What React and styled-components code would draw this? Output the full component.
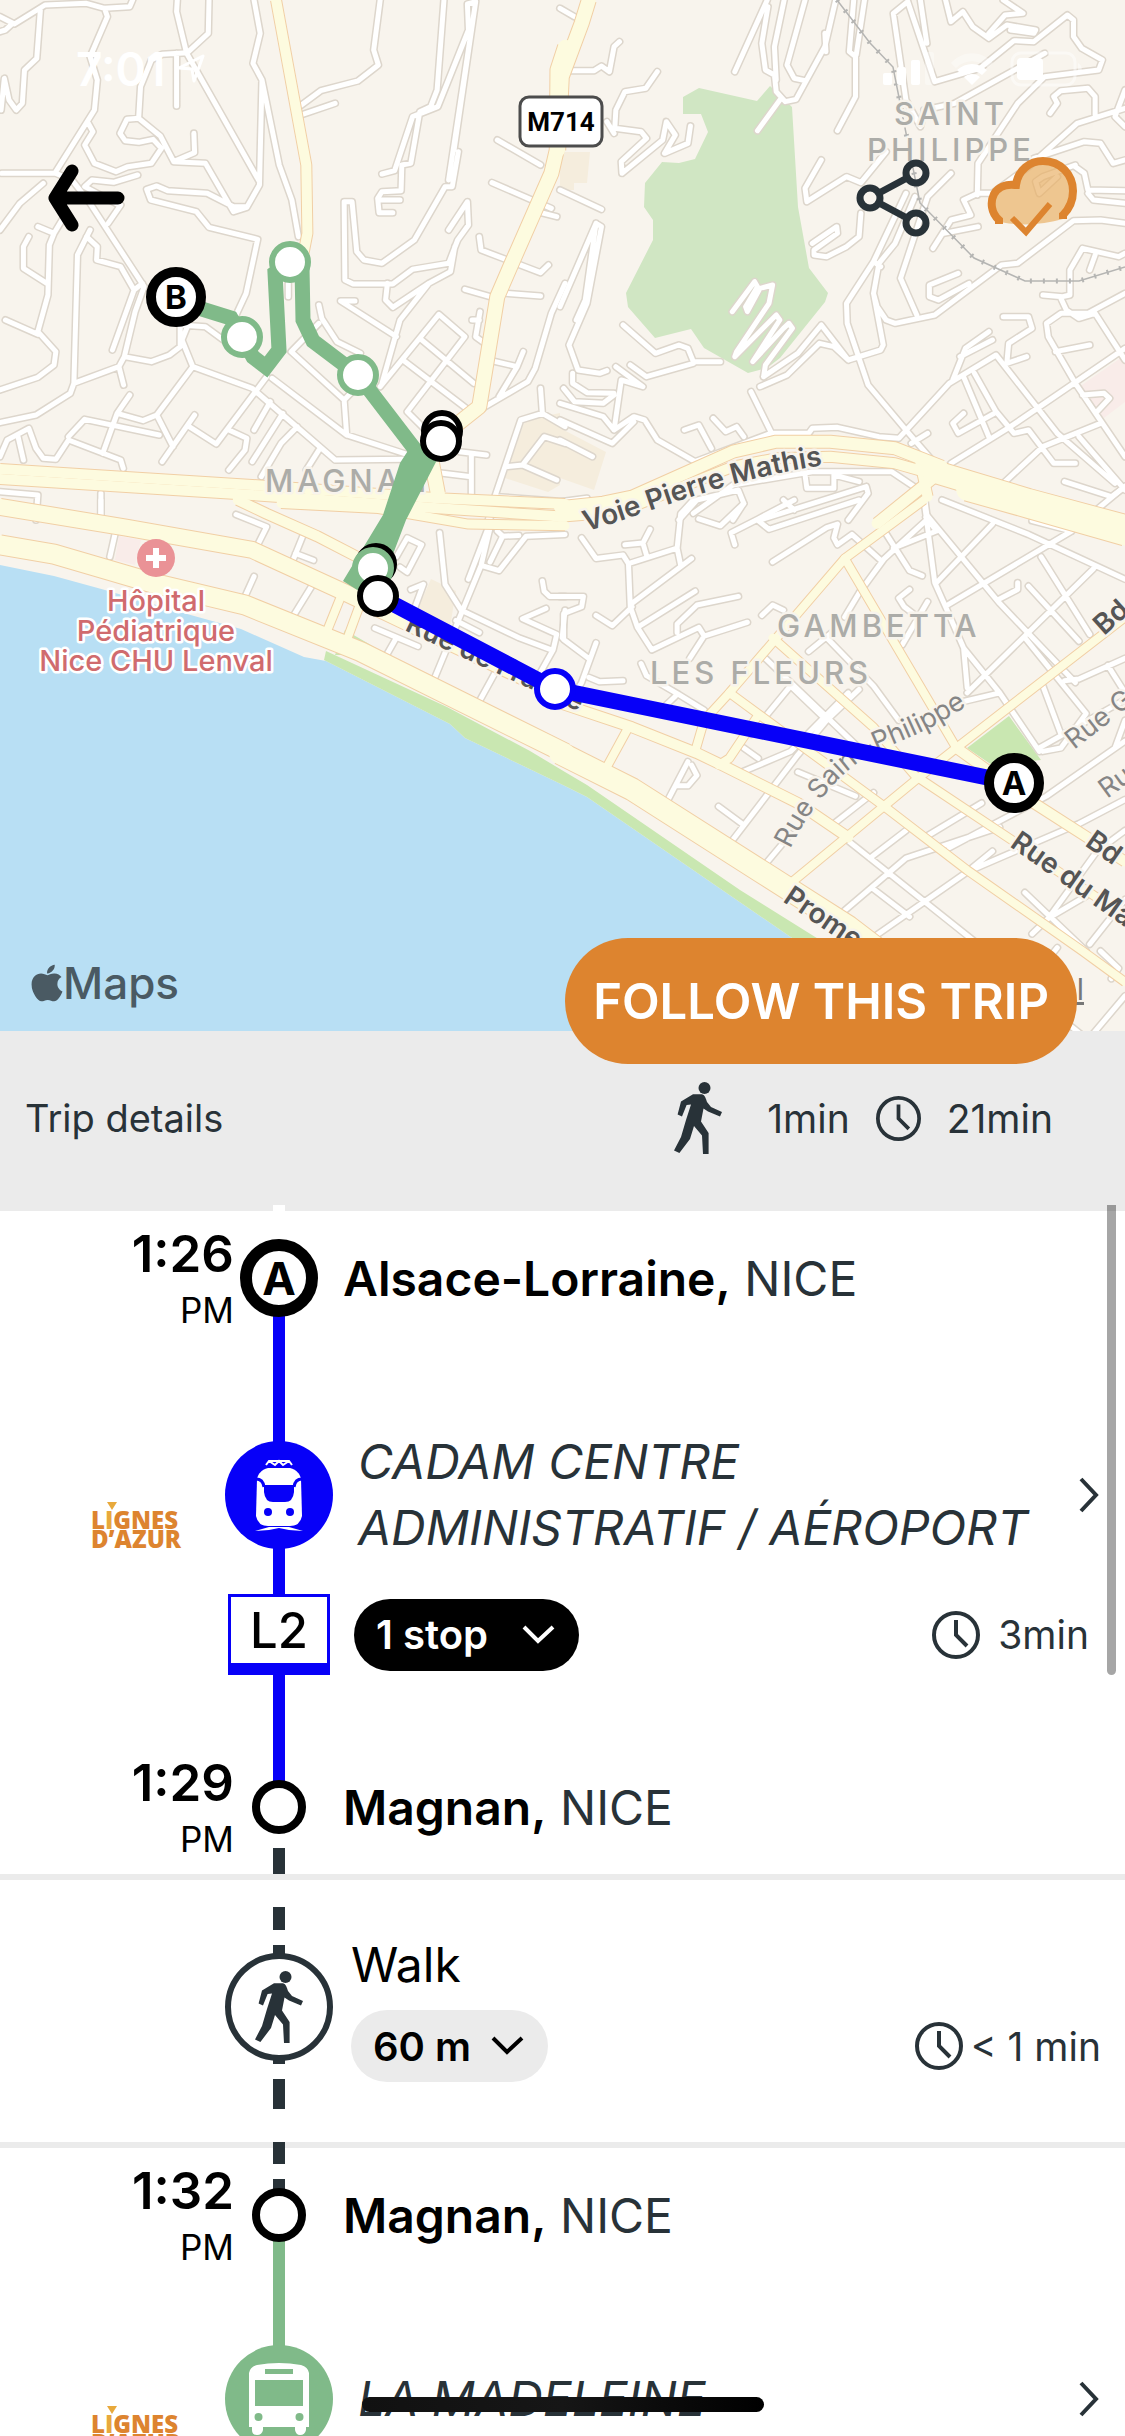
import styled, { createGlobalStyle, css } from "styled-components";
import { FaApple } from "react-icons/fa";

const dark = "#283238";
const tramBlue = "#0700f8";
const busGreen = "#80ba89";
const orange = "#dd842f";
const lightGrey = "#ebebeb";

export default function App() {
	return (
		<>
			<GlobalStyle />
			<Screen>
				<MapArea>
					<CityMap />
					<StatusBar>
						<StatusTime>
							7:01
							<LocationIcon />
						</StatusTime>
						<StatusIcons />
					</StatusBar>
					<TopBar>
						<IconButton aria-label="Back">
							<BackIcon />
						</IconButton>
						<TopActions>
							<IconButton aria-label="Share">
								<ShareIcon />
							</IconButton>
							<IconButton aria-label="Saved offline">
								<CloudIcon />
							</IconButton>
						</TopActions>
					</TopBar>
					<MapsBrand>
						<AppleLogo />
						Maps
					</MapsBrand>
					<LegalLink href="#legal">Legal</LegalLink>
					<FollowButton>FOLLOW THIS TRIP</FollowButton>
				</MapArea>

				<Summary>
					<SummaryTitle>Trip details</SummaryTitle>
					<SummaryItem $gap={45}>
						<WalkIcon />
						1min
					</SummaryItem>
					<SummaryItem $gap={26}>
						<ClockIcon size={45} />
						21min
					</SummaryItem>
				</Summary>

				<TripList>
					<Stop time="1:26" name="Alsace-Lorraine" letter="A" above="#fff" below={tramBlue} divider />
					<Ride
						color={tramBlue}
						icon={<TramIcon />}
						direction="CADAM CENTRE ADMINISTRATIF / AÉROPORT"
						line="L2"
						stops="1 stop"
						duration="3min"
					/>
					<Stop time="1:29" name="Magnan" above={tramBlue} below={dashBelow} />
					<Walk />
					<Stop time="1:32" name="Magnan" above={dashAbove} below={busGreen} divider />
					<Ride color={busGreen} icon={<BusIcon />} direction="LA MADELEINE" />
					<ScrollThumb />
				</TripList>
				<HomeIndicator />
			</Screen>
		</>
	);
}

/* ---------- trip rows ---------- */

const dashBelow = `transparent 41px, ${dark} 41px`;
const dashAbove = `${dark} 22px, transparent 22px, transparent 37px, ${dark} 37px`;
const dashWalk = `transparent 27px, ${dark} 27px, ${dark} 50px, transparent 50px, transparent 65px, ${dark} 65px, ${dark} 184px, transparent 184px, transparent 199px, ${dark} 199px, ${dark} 229px, transparent 229px`;

function Stop({ time, name, letter, above, below, divider }) {
	return (
		<StopRow $above={above} $below={below} $divider={divider}>
			<TimeCell>
				<Hour>{time}</Hour>
				<Meridiem>PM</Meridiem>
			</TimeCell>
			<StopDot $big={!!letter}>{letter}</StopDot>
			<StopName>
				<strong>{name},</strong> NICE
			</StopName>
		</StopRow>
	);
}

function Ride({ color, icon, direction, line, stops, duration }) {
	return (
		<RideBox $color={color}>
			<RideRow>
				<Operator>
					<LignesLogo />
				</Operator>
				<ModeBadge $color={color}>{icon}</ModeBadge>
				<Direction>
					<DirectionText>{direction}</DirectionText>
					<PlainButton aria-label="Show line">
						<ChevronRight />
					</PlainButton>
				</Direction>
			</RideRow>
			{line && (
				<RideRow>
					<span />
					<LineTag $color={color}>{line}</LineTag>
					<RideOptions>
						<Pill $dark>
							{stops}
							<ChevronDown />
						</Pill>
						<Duration $gap={18}>
							<ClockIcon size={48} />
							{duration}
						</Duration>
					</RideOptions>
				</RideRow>
			)}
		</RideBox>
	);
}

function Walk() {
	return (
		<WalkBox>
			<span />
			<WalkBadge>
				<WalkIcon />
			</WalkBadge>
			<WalkBody>
				<WalkTitle>Walk</WalkTitle>
				<WalkOptions>
					<Pill>
						60 m
						<ChevronDown />
					</Pill>
					<Duration $gap={8}>
						<ClockIcon size={48} />
						&lt; 1 min
					</Duration>
				</WalkOptions>
			</WalkBody>
		</WalkBox>
	);
}

/* ---------- icons ---------- */

function BackIcon() {
	return (
		<svg width="78" height="68" viewBox="0 0 78 68" fill="none" stroke="#000" strokeWidth="13" strokeLinecap="round">
			<path d="M25 7L8 34L25 61M10 34H71" strokeLinejoin="round" />
		</svg>
	);
}

function ShareIcon() {
	return (
		<svg width="74" height="84" viewBox="0 0 74 84" fill="none" stroke={dark} strokeWidth="7">
			<circle cx="14" cy="42" r="10" />
			<circle cx="60" cy="17" r="10" />
			<circle cx="60" cy="67" r="10" />
			<path d="M23 37L51 22M23 47L51 62" />
		</svg>
	);
}

function CloudIcon() {
	return (
		<svg width="92" height="84" viewBox="0 0 92 84" fill="none" stroke={orange} strokeWidth="8">
			<path d="M13 66C4 60 1 48 5 39C9 30 18 27 29 28C32 12 45 3 58 4C77 5 88 19 88 35C88 47 83 57 76 63C56 69 33 70 13 66Z" fill="#e9b064" fillOpacity=".68" stroke="none" />
			<path d="M12 68V64C4 57 3 46 7 38C11 31 19 28 28 29H29C31 14 43 5 56 5C74 5 86 19 86 35C86 45 82 53 76 59V63" />
			<path d="M25 62L39 76L63 48" strokeWidth="6" />
		</svg>
	);
}

function LocationIcon() {
	return (
		<svg width="28" height="30" viewBox="0 0 28 30" fill="none" stroke="#fff" strokeWidth="3" strokeLinejoin="round">
			<path d="M2 14L26 2L17 27L15 15Z" />
		</svg>
	);
}

function StatusIcons() {
	return (
		<svg width="202" height="40" viewBox="0 0 202 40" fill="#fff">
			<rect x="0" y="24" width="9" height="12" rx="2" />
			<rect x="14" y="18" width="9" height="18" rx="2" />
			<rect x="28" y="11" width="9" height="25" rx="2" />
			<rect x="42" y="3" width="9" height="33" rx="2" opacity=".35" />
			<path d="M68 14C80 1 98 1 110 14L105 19C96 10 82 10 73 19Z" opacity=".35" />
			<path d="M74 21C83 13 95 13 104 21L99 26C93 21 85 21 79 26ZM81 28C86 24 92 24 97 28L89 36Z" />
			<rect x="129" y="4" width="63" height="32" rx="9" fill="none" stroke="#fff" strokeWidth="3" opacity=".45" />
			<rect x="134" y="9" width="26" height="22" rx="4" />
			<path d="M195 14C200 17 200 23 195 26Z" opacity=".45" />
		</svg>
	);
}

function WalkIcon() {
	return (
		<svg width="48" height="72" viewBox="0 0 48 72" fill={dark}>
			<circle cx="30.500" cy="6" r="6" />
			<path d="M19 12.300H28C31 13 32 17 33 20L37 25L48 30L46 34.500L34 29.500L29.500 26.500L27 39.500L34.600 51V72H29L28 53.500L20 44L16 57L5.400 71L0 68.500L7 55L12 38L17 22.500L12.600 23L8 34.500L3.600 32.500L7 19.500Z" />
		</svg>
	);
}

function ClockIcon({ size }) {
	return (
		<svg width={size} height={size} viewBox="0 0 48 48" fill="none" stroke={dark} strokeWidth="4">
			<circle cx="24" cy="24" r="22" />
			<path d="M24 9V24L35 35" />
		</svg>
	);
}

function ChevronDown() {
	return (
		<svg width="33" height="20" viewBox="0 0 33 20" fill="none" stroke="currentColor" strokeWidth="4">
			<path d="M2 2L16 16L31 2" />
		</svg>
	);
}

function ChevronRight() {
	return (
		<svg width="20" height="36" viewBox="0 0 20 36" fill="none" stroke={dark} strokeWidth="4">
			<path d="M2 2L17 18L2 34" />
		</svg>
	);
}

function TramIcon() {
	return (
		<svg width="48" height="72" viewBox="0 0 48 72" fill="#fff">
			<path d="M11 6L14 2H34L37 6M14 2L20 6L24 2L28 6L34 2" fill="none" stroke="#fff" strokeWidth="2" />
			<path d="M13 9H35C42 11 45 15 46 20L47 57Q45 67 35 67H13Q3 67 1 57L2 20C3 15 6 11 13 9Z" />
			<path d="M9 26H39V33Q38 43 30 43H18Q10 43 9 33Z" fill={tramBlue} />
			<path d="M1 20Q8 20 9 28M47 20Q40 20 39 28" fill="none" stroke={tramBlue} strokeWidth="3" />
			<circle cx="13" cy="53" r="4" fill={tramBlue} />
			<circle cx="35" cy="53" r="4" fill={tramBlue} />
			<path d="M3 67.500H45" stroke={tramBlue} strokeWidth="1" />
			<path d="M0 72L14 68H34L48 72L34 71L24 69L14 71Z" />
		</svg>
	);
}

function BusIcon() {
	return (
		<svg width="60" height="72" viewBox="0 0 60 72" fill="#fff">
			<path d="M0 10Q1 4 8 2Q30 -2 52 2Q59 4 60 10V64H57V67Q56 72 51 72Q47 72 46 67V64H14V67Q13 72 8 72Q3 72 3 67V64H0Z" />
			<path d="M16 6H44V11H16ZM6 17H54V43H6Z" fill={busGreen} />
			<circle cx="9.500" cy="54" r="4" fill={busGreen} />
			<circle cx="50.500" cy="54" r="4" fill={busGreen} />
		</svg>
	);
}

function LignesLogo() {
	return (
		<svg width="104" height="46" viewBox="0 0 104 46">
			<g fontFamily="'Open Sans', sans-serif" fontWeight="800" fontSize="24" fill={orange}>
				<text x="-1" y="27">
					L<tspan fill="#e8a93c">I</tspan>GNES
				</text>
				<text x="-1" y="46">D’AZUR</text>
			</g>
			<path d="M15 0H25L20 8Z" fill="#e8a93c" />
		</svg>
	);
}

/* ---------- map ---------- */

// roads are stored per tile, each tile in its own grid
const tiles = [
	{
		id: "nw",
		transform: "scale(.36036 .33333)",
		minor:
			"M0 50L40 72L125 15L240 10L290 25L360 20L368 0M0 95L15 90L35 70M112 30L102 175L68 210L62 310L45 330L25 300L12 235L3 330M290 25L298 50L250 170L270 240L262 330L155 515M5 520H150M245 370L258 395L235 435L262 490L322 515L355 500L420 490L448 445L425 418L385 427L347 422L333 400L352 358L385 355L445 408L482 485L540 458L538 400M385 350L390 260L420 180L450 163L520 158L578 100L580 0M490 160V318M492 0L490 35L518 160L720 545M705 0L722 100L702 190L727 240L720 555L685 622L648 635L570 490L482 485M727 240L775 495L810 600L828 710M685 620H648L575 580L465 572L435 558L407 568L418 600L545 635L580 682L715 718L683 880L655 945M1055 0L1037 150L1050 195L993 243L890 272L830 320M835 345L930 310M1232 0L1213 270L1195 320L1165 335L1140 490L1115 495L1113 572L1060 575L1048 595L1052 638H1090M1060 522L1095 512L1145 350L1215 320L1300 90L1297 12L1320 5L1260 450M1050 600H1110M1272 455L1255 560H1235L1150 720L1060 790L1010 780L990 755L977 605H955L957 840L980 852H1090L1145 808L1245 790L1270 720L1300 675L1297 605L1245 690M1320 5L1245 540M1075 850L1070 900L1090 922L1190 850L1250 815L1262 740M985 903H945L1100 1010M885 915L893 955L935 1025L1000 1060M1190 850L1110 960L1060 1150M1055 1160L1218 943L1290 1010L1130 1235L1190 1300M1165 1015L1315 1150M1118 1080L1300 1230M885 970L808 1055L955 1200L1000 1150M955 1200L962 1305L1125 1362M120 550L55 610L0 690M155 520L200 540L250 610L400 860L375 935L345 1070M335 615L300 670M382 525L315 547L255 540L235 560L330 615M105 680L150 700L137 735L133 885L105 995L155 1055L150 1095L105 1132L0 1170M150 700L175 655M80 710L65 740V805L130 850M15 960L105 1003M250 690L215 765L205 1150L195 1180L100 1245L0 1268M240 710L270 740L268 780L335 800L372 870L312 1050M372 870L395 850M205 1150L330 1100L345 1070L420 1085L470 1065L500 1040V980M500 975L570 980L620 1020M330 1100L343 1155M520 980L505 1020L535 1100L700 1165L930 1380L1125 1378M535 1100L435 1245L397 1262L325 1240L360 1185M325 1240L285 1360M0 1370L20 1320L80 1285L100 1345L120 1375L155 1378L190 1320L335 1380L342 1405M190 1310L235 1258L442 1305M50 1310L65 1380M435 1245L480 1340M540 1245L450 1385M525 1280L600 1332L740 1130M635 1290L685 1315L680 1350L635 1410M755 1135L962 1305M750 1205L705 1290M785 1240L700 1385M825 1280L780 1330L725 1430M885 1350L850 1410M1380 420L1500 495M1365 548L1530 625M1490 635L1545 650M1330 710L1335 750L1500 818L1522 795M1290 868L1360 890M1405 880L1500 888M1332 935L1320 1010L1345 1030M1310 960H1330M1375 1085L1435 1100L1452 1055M1435 1100L1385 1190M1568 850L1530 940L1485 1105L1465 1145L1330 1230M1275 1355L1350 1365M1308 1365V1490M1195 1415L1308 1430M1505 1240L1445 1260L1370 1500L1355 1560M1380 1490L1568 1505M1500 1165L1505 1240L1568 1280M1405 1400L1450 1395L1545 1440M1450 1395L1510 1310L1568 1330M0 1475L105 1485L100 1560M280 1480V1560M800 850V890",
		major: [
			[10, "M766 0L850 495L853 700L835 800"],
			[14, "M1568 140L1547 210L1545 450L1530 520L1420 790L1380 890L1330 1220L1190 1340L1215 1480"],
			[10, "M0 1407L700 1455L1215 1495L1568 1512"],
			[10, "M0 1437L700 1485L1215 1525L1568 1550"],
		],
	},
	{
		id: "ne",
		transform: "translate(560 0) scale(.36036 .33333)",
		minor:
			"M0 25L40 50M20 212H95L115 198L137 215L150 140L165 125M270 215L238 265L180 275L155 330L152 385L225 395L240 415L170 485L172 520L285 420L295 365L320 405L290 460L355 430L362 378M130 365L150 400M0 570L115 628M575 0L485 215M577 20L560 130L570 210L595 225L600 275L625 305L655 298L735 140L765 0M610 300L548 392M622 0L595 140L600 240M680 0L630 195L650 235L680 242M735 100L738 155M815 0L803 155L820 170V290L770 392M845 0L822 165M965 5L925 40L960 300L1000 380L1010 340M965 5L1040 245L1165 205L1260 122L1315 125L1408 45L1425 60V110L1448 145L1505 180L1495 210L1345 230L1270 310L1160 490L1158 585M1000 0L1018 130M1070 0L1085 65L1118 35L1145 80L1190 115L1240 75L1320 90L1315 100L1250 90M1230 0L1285 40L1235 45L1190 100M1345 160L1095 310L1010 330M1568 270L1540 350L1568 380M1360 340L1380 310L1370 290L1390 272L1465 265L1485 290V345M1568 325L1435 370L1300 500L1200 580H1160L1120 600L1140 645L1085 660L1035 745M1315 475L1455 425L1500 430L1535 490L1568 480M1430 500L1455 520L1465 570L1568 572M1465 580L1480 600L1568 610M1430 495L1340 530L1320 545L1330 580L1380 530M1065 700L1160 680M1085 520L1020 590L945 835L990 945M725 480L680 565L685 605L795 530L835 548L905 455M835 640L830 710L795 740L740 770L705 765V750L770 700L768 680L700 730M960 580L870 785L795 910L797 970L855 1155L960 1290L1040 1390M985 590L930 730L885 790L870 880L880 920L905 960L930 970L1040 945L1225 795L1270 790L1425 662L1500 660L1568 670M870 785L890 800M870 880L897 1035L890 1050L800 1080L725 975L660 1060L565 1130M1105 820L1025 855V890L1050 900L1135 850M555 1160L630 1125L720 1030L760 1040L800 1080M565 1130L570 1095L645 985L635 970L620 985L535 1085L610 960L600 945L485 1070L490 1055L580 910L590 855L555 865L520 935L515 920L548 860L540 845L478 935M0 920L100 670L115 680L75 910L25 1035L50 1110L110 1120L130 1112M100 670L70 900L45 960M175 975L265 1060L330 1035L355 1045L370 1085H445M155 1100L230 1160L170 1140L150 1290M195 1095L240 1130L370 1090M35 1120V1150L75 1178L150 1180M10 1165L40 1205L120 1210L150 1185M0 1210L120 1250L150 1290L205 1250L235 1260L270 1320L375 1385M0 1260L145 1330L205 1265M0 1320L90 1370M530 1175L585 1295M345 1290L385 1275L420 1345M425 1255L460 1295L490 1280L510 1310M375 1385L585 1300H690L700 1285L770 1282L885 1310L940 1315L1080 1150L1210 1065L1380 1300M1020 1300L975 1330M1090 1140L1125 1045L1190 995M1110 1070L1200 1020M1295 1070L1240 1090L1245 1030L1310 985L1300 950H1230M1120 1130L1190 1310M1150 1120L1210 1235L1260 1300L1300 1290L1370 1390H1430M1120 1240L1090 1270L1105 1300L1205 1240M1085 1390L1250 1280L1568 1045M1230 1450L1340 1340L1500 1270M1340 885L1395 890L1415 885V810L1450 745L1550 770L1568 760M1485 765L1470 810M1568 880L1465 940H1390L1350 970L1355 1010L1430 1150L1568 1370M1390 895L1405 930L1440 955L1485 940L1568 1080M1375 1055L1470 1035M1450 1185L1510 1180L1525 1195L1490 1235M1440 1310L1568 1470M1380 1300L1540 1450M1400 1445L1530 1490L1568 1460M370 1540L480 1455L700 1415H920L1010 1480L1020 1560M330 1560L380 1500L495 1470L510 1510L480 1560M680 1425L685 1465H760V1425L830 1445M850 1460L555 1560M850 1460L855 1480L800 1560M0 1505L75 1495M620 1500L650 1530",
		major: [
			[14, "M80 0L60 70L5 230L-5 450"],
			[11, "M1040 1430L880 1570"],
			[10, "M1000 1390L1020 1490"],
			[10, "M0 1550L60 1545L200 1520L480 1400L600 1375L750 1370L930 1390L1060 1430"],
			[12, "M0 1522L120 1508L200 1490L480 1355L600 1325L750 1325L930 1345L1060 1400"],
			[22, "M1040 1415L1300 1500L1568 1578"],
		],
	},
	{
		id: "sw",
		transform: "translate(0 500) scale(.36036 .34435)",
		minor:
			"M280 0V50M320 95L305 165M655 42L740 78L715 130M840 105L815 170M820 155L870 175M705 222L680 280M865 250L815 335M1100 165L1130 110L1170 130L1130 210L1110 195M1145 330L1175 245L1140 260M1220 95L1235 245L1280 320L1440 400L1530 435M1370 0L1355 80L1300 230M1360 80L1335 190L1205 520M1335 190L1385 205L1460 105L1568 100M1380 90L1395 105L1440 103M1360 180L1395 105M1265 350L1330 385M1505 235L1510 265L1525 280H1568M1515 315L1450 345L1545 390L1535 435L1500 500M1568 320L1560 400M1040 372L1160 425M1100 400L1070 455M1380 490L1330 585",
		major: [
			[8, "M900 400L950 270M965 400L1000 300"],
			[10, "M660 0L740 40L880 105L1000 170"],
			[9, "M780 10L1050 25L1300 70L1568 75"],
			[16, "M0 20L350 80L700 145L960 270L1140 360L1568 570"],
			[19, "M0 130L150 157L420 240L680 305L1000 440L1568 735"],
		],
	},
	{
		id: "se",
		transform: "translate(560 500) scale(.36036 .34435)",
		minor:
			"M60 110L100 170L175 160L190 185L195 310L215 370L255 435L385 370L400 395L520 355M180 130L230 125L250 85M230 125L240 160M190 185L325 140L335 40L370 0M325 140L335 190M365 170L200 300M375 265L215 370M495 280L380 305L325 360V385M400 395L360 460M100 335L145 365L200 310M385 55L445 75L510 10M485 130L475 95L550 55L650 0M550 60L580 85L830 0M590 180L740 80L770 70L760 110L770 130L810 100L890 175M0 280H65L60 310L10 330V405L80 460M100 415L60 530L20 600M80 515L110 528L175 525M560 335L590 305L620 320M790 340L830 270L900 170L1015 60M900 90L970 205L1005 220M1015 40L1040 240L1070 310M1010 0L1015 40L1220 300L1430 530M1015 50L1045 90L925 140M1060 0L1300 100L1568 230M1200 70L1045 240M1420 90L1075 305M1568 -40L1470 45M1310 60L1420 90M1270 240V260L1215 290M1335 165L1470 390M1480 200L1290 395L1130 560M1300 250L1440 410M970 260L940 285L955 310L980 330M1020 295L950 420M1070 310L1120 430L1220 560L1330 730M1120 430L1130 545M1220 560L1120 585M225 475L240 510L330 565L400 610M320 570L290 600M560 450L750 640L850 740M640 540L530 680M640 540L740 640M740 400L870 540L940 640M690 440L760 380M830 550L740 640L660 740L470 1000M800 560L640 730L505 790M510 720L550 750M660 790L820 860M440 890L505 940M355 760L295 880M365 770L380 800L355 830H325M560 1070L640 970M870 850L760 940M800 990L1160 1290M860 1040L960 960M870 1130L970 1210M1220 950L960 1040L770 1210M1200 1020L1130 1080L870 1270M1170 880L1020 975M1568 700L1350 860L1080 1010M1568 870L1440 940L1130 1080M1290 1140L1460 1310M1568 960L1490 1020L1355 1215L1310 1260M1470 1290L1568 1160M1355 1215L1460 1150M1500 1310L1550 1360L1530 1390M1400 525L1440 520L1568 460M1330 720L1568 580M1340 540L1390 680M1520 480L1568 560M1568 640L1540 720M1340 730L1390 720L1460 620L1290 400M1380 1300L1320 1380M1568 1440L1465 1568L1420 1530",
		major: [
			[8, "M190 660L130 775M375 730L400 640L470 560L790 170L1010 0"],
			[8, "M790 170L1100 720M590 400L870 660L985 800L1250 985L1568 1210M550 625L470 750L440 770"],
			[8, "M470 560L900 890L1130 1075L1450 1310L1568 1400"],
			[8, "M1568 340L1100 720L985 815L620 1130"],
			[10, "M1100 720L1300 870L1568 1050M0 590L200 660L380 735L450 770L660 880L800 980"],
			[22, "M1130 -30L1300 20L1568 100"],
			[22, "M0 735L200 840L560 1080L800 1240L1000 1400"],
		],
	},
];

function CityMap() {
	return (
		<MapSvg viewBox="0 0 1125 1031" preserveAspectRatio="xMidYMid slice">
			<defs>
				<path id="voie" d="M586 531C640 518 720 478 840 463" />
				<path id="philippe" d="M790 849C812 803 845 768 872 754S930 734 990 690" />
			</defs>
			<rect width="1125" height="1031" fill="#f8f4ed" />

			<path d="M683 97L699 88L757 101L770 86L792 107L798 207L809 268L828 293L825 302L780 358L767 368L748 373L704 348L691 329L655 338L628 307L626 293L653 240V220L644 207L645 183L662 162L679 163L695 159L708 132L701 114H683Z" fill="#d0e6c3" />
			<path d="M560 152H590L587 183H574V190H560ZM560 428L606 452L594 490L560 478ZM525 420L560 413V485L548 492L505 478ZM431 579L456 591L450 627L414 617Z" fill="#f5eddd" />
			<path d="M1079 387L1125 355V402L1104 418ZM119 536L141 540L135 565L115 560Z" fill="#f9ece9" />
			<path d="M0 565L54 576L105 590L187 614L241 629L304 657L326 661L450 724L465 738L565 786L587 797L795 940L930 1031H0Z" fill="#b8dff4" />
			<path d="M326 651L447 707L530 751L565 772L587 785L740 890L820 940H795L587 797L565 786L465 738L450 724L324 660Z" fill="#c9e7b1" />
			<path d="M345 630L388 655H335ZM967 748L1009 716L1041 760L992 765Z" fill="#c9e7b1" />

			{tiles.map((tile) => (
				<g key={tile.id} transform={tile.transform}>
					<Road d={tile.minor} $color="#ddd6cc" $width={8} />
				</g>
			))}
			{tiles.map((tile) => (
				<g key={tile.id} transform={tile.transform}>
					<Road d={tile.minor} $color="#fff" $width={5} />
				</g>
			))}
			{tiles.map((tile) => (
				<g key={tile.id} transform={tile.transform}>
					{tile.major.map(([width, d]) => (
						<Road key={d} d={d} $color="#f1cfa5" $width={width + 2} $flat />
					))}
				</g>
			))}
			{tiles.map((tile) => (
				<g key={tile.id} transform={tile.transform}>
					{tile.major.map(([width, d]) => (
						<Road key={d} d={d} $color="#fdfbdf" $width={width} />
					))}
				</g>
			))}

			<g fill="none" stroke="#b5b5b3">
				<path d="M837 0L870 43L893 67L906 133L920 203L974 258L1025 281H1079L1125 267" strokeWidth="1.500" />
				<path d="M837 0L870 43L893 67L906 133L920 203L974 258L1025 281H1079L1125 267" strokeWidth="5" strokeDasharray="2 11" />
			</g>

			<AreaLabel x="265" y="492">MAGNAN</AreaLabel>
			<AreaLabel x="951" y="125" textAnchor="middle">SAINT</AreaLabel>
			<AreaLabel x="951" y="161" textAnchor="middle">PHILIPPE</AreaLabel>
			<AreaLabel x="777" y="637">GAMBETTA</AreaLabel>
			<AreaLabel x="650" y="684">LES FLEURS</AreaLabel>

			<StreetLabel $strong>
				<textPath href="#voie">Voie Pierre Mathis</textPath>
			</StreetLabel>
			<StreetLabel>
				<textPath href="#philippe">Rue Saint-Philippe</textPath>
			</StreetLabel>
			<StreetLabel $strong transform="translate(404 630) rotate(25)">Rue de France</StreetLabel>
			<StreetLabel $strong transform="translate(1009 846) rotate(35)">Rue du Ma</StreetLabel>
			<StreetLabel $strong transform="translate(1084 845) rotate(35)">Bd V</StreetLabel>
			<StreetLabel $strong transform="translate(1104 636) rotate(-42)">Bd</StreetLabel>
			<StreetLabel transform="translate(1074 750) rotate(-38)">Rue G</StreetLabel>
			<StreetLabel transform="translate(1107 799) rotate(-36)">Ru</StreetLabel>
			<StreetLabel $strong transform="translate(782 901) rotate(34)">Prome</StreetLabel>

			<circle cx="156" cy="558" r="19" fill="#ea9296" />
			<path d="M156 548V568M146 558H166" stroke="#fff" strokeWidth="6" />
			<PlaceLabel x="156" y="611">Hôpital</PlaceLabel>
			<PlaceLabel x="156" y="641">Pédiatrique</PlaceLabel>
			<PlaceLabel x="156" y="671">Nice CHU Lenval</PlaceLabel>

			<rect x="520" y="97" width="82" height="49" rx="9" fill="#fff" stroke="#4c4c4c" strokeWidth="3" />
			<ShieldLabel x="561" y="131">M714</ShieldLabel>

			<path d="M176 301L231 318L242 337L253 357L266 367L279 350L275 273L290 262L302 267L303 320L313 341L358 375L420 456" fill="none" stroke={busGreen} strokeWidth="15" />
			<path d="M411 446L437 460L406 520L390 562L370 598L343 581L383 515L400 463Z" fill={busGreen} />
			<path d="M378 596L555 689L1014 783" fill="none" stroke={tramBlue} strokeWidth="16" />
			{[
				[290, 262, busGreen],
				[242, 337, busGreen],
				[358, 375, busGreen],
				[442, 431, "#000"],
				[441, 441, "#000"],
				[376, 564, "#000"],
				[373, 568, busGreen],
				[378, 596, "#000"],
				[555, 689, tramBlue],
			].map(([x, y, color]) => (
				<circle key={`${x}-${y}`} cx={x} cy={y} r="18" fill="#fff" stroke={color} strokeWidth="6" />
			))}
			<EndMarker cx="176" cy="297" r="25" />
			<EndLabel x="176" y="309">B</EndLabel>
			<EndMarker cx="1014" cy="783" r="25" />
			<EndLabel x="1014" y="795">A</EndLabel>
		</MapSvg>
	);
}

/* ---------- styles ---------- */

const GlobalStyle = createGlobalStyle`
	* {
		box-sizing: border-box;
	}

	body {
		margin: 0;
		font-family: Inter, sans-serif;
		font-size: 39px;
		color: ${dark};
		background: #fff;
	}

	button {
		font: inherit;
		color: inherit;
		border: none;
		padding: 0;
		cursor: pointer;
	}

	svg {
		display: block;
		flex-shrink: 0;
	}
`;

const Screen = styled.main`
	position: relative;
	display: flex;
	flex-direction: column;
	height: 100vh;
	overflow: hidden;
`;

const MapArea = styled.section`
	position: relative;
	z-index: 1;
	flex-shrink: 0;
	height: 1031px;
`;

const MapSvg = styled.svg`
	position: absolute;
	inset: 0;
	width: 100%;
	height: 100%;
`;

const Road = styled.path`
	fill: none;
	stroke: ${({ $color }) => $color};
	stroke-width: ${({ $width }) => $width}px;
	stroke-linejoin: round;
	stroke-linecap: ${({ $flat }) => ($flat ? "butt" : "round")};
	vector-effect: non-scaling-stroke;
`;

const MapLabel = styled.text`
	stroke: #f8f4ed;
	stroke-width: 5px;
	stroke-linejoin: round;
	paint-order: stroke;
`;

const AreaLabel = styled(MapLabel)`
	font-size: 31px;
	font-weight: 500;
	letter-spacing: 4px;
	fill: #acaca8;
`;

const StreetLabel = styled(MapLabel)`
	font-size: ${({ $strong }) => ($strong ? 28 : 27)}px;
	font-weight: ${({ $strong }) => ($strong ? 600 : 400)};
	fill: ${({ $strong }) => ($strong ? "#555" : "#858585")};
`;

const PlaceLabel = styled(MapLabel)`
	font-size: 29px;
	font-weight: 500;
	text-anchor: middle;
	stroke: #fff;
	fill: #d06b6e;
`;

const ShieldLabel = styled.text`
	font-family: Roboto, sans-serif;
	font-size: 26px;
	font-weight: 700;
	text-anchor: middle;
`;

const EndMarker = styled.circle`
	fill: #fff;
	stroke: #000;
	stroke-width: 10px;
`;

const EndLabel = styled.text`
	font-size: 33px;
	font-weight: 700;
	text-anchor: middle;
	fill: #000;
`;

const StatusBar = styled.div`
	position: relative;
	display: flex;
	justify-content: space-between;
	align-items: center;
	height: 138px;
	padding: 0 40px 0 76px;
	font-size: 46px;
	font-weight: 600;
	color: #fff;
`;

const StatusTime = styled.div`
	display: flex;
	align-items: center;
	gap: 12px;
`;

const TopBar = styled.nav`
	position: relative;
	display: flex;
	justify-content: space-between;
	align-items: center;
	height: 120px;
	padding: 0 46px 0 47px;
`;

const TopActions = styled.div`
	display: flex;
	align-items: center;
	gap: 57px;
`;

const IconButton = styled.button`
	background: none;
`;

const MapsBrand = styled.div`
	position: absolute;
	left: 31px;
	bottom: 20px;
	display: flex;
	align-items: center;
	font-size: 44px;
	line-height: 56px;
	font-weight: 500;
	color: #4a5a63;
`;

const AppleLogo = styled(FaApple)`
	width: 32px;
	height: 42px;
`;

const LegalLink = styled.a`
	position: absolute;
	right: 41px;
	bottom: 24px;
	font-size: 30px;
	color: #777;
`;

const FollowButton = styled.button`
	position: absolute;
	right: 48px;
	bottom: -33px;
	height: 126px;
	padding: 0 28px;
	border-radius: 63px;
	background: ${orange};
	color: #fff;
	font-size: 49px;
	font-weight: 600;
	white-space: nowrap;
`;

const Summary = styled.header`
	display: flex;
	flex-shrink: 0;
	align-items: center;
	gap: 26px;
	height: 174px;
	padding: 0 72px 0 25px;
	background: ${lightGrey};
`;

const SummaryTitle = styled.h1`
	flex: 1;
	margin: 0;
	font-size: 38px;
	font-weight: 400;
`;

const SummaryItem = styled.span`
	display: flex;
	align-items: center;
	gap: ${({ $gap }) => $gap}px;
`;

const TripList = styled.section`
	position: relative;
	flex: 1;
	min-height: 0;
	overflow: hidden;
`;

// time | node on the line | text
const columns = css`
	display: grid;
	grid-template-columns: 225px 108px 1fr;
	align-items: center;
`;

const lineAt = "273px";

const StopRow = styled.div`
	${columns}
	height: ${({ $divider }) => ($divider ? 140 : 134)}px;
	padding-top: ${({ $divider }) => ($divider ? 6 : 0)}px;
	background:
		linear-gradient(${({ $above }) => ($above.includes(",") ? $above : `${$above}, ${$above}`)}) ${lineAt} 0 / 12px 50% no-repeat,
		linear-gradient(${({ $below }) => ($below.includes(",") ? $below : `${$below}, ${$below}`)}) ${lineAt} 100% / 12px 50% no-repeat,
		linear-gradient(${lightGrey}, ${lightGrey}) 0 0 / 100% ${({ $divider }) => ($divider ? 6 : 0)}px no-repeat;
`;

const TimeCell = styled.div`
	display: flex;
	flex-direction: column;
	padding-top: 4px;
	margin-right: -9px;
	text-align: right;
	color: #000;
`;

const Hour = styled.span`
	font-size: 51px;
	line-height: 60px;
	font-weight: 600;
`;

const Meridiem = styled.span`
	font-size: 35px;
	line-height: 52px;
`;

const StopDot = styled.span`
	display: flex;
	justify-content: center;
	align-items: center;
	justify-self: center;
	width: ${({ $big }) => ($big ? 78 : 54)}px;
	height: ${({ $big }) => ($big ? 78 : 54)}px;
	border: ${({ $big }) => ($big ? 12 : 8)}px solid #000;
	border-radius: 50%;
	background: #fff;
	color: #000;
	font-size: 45px;
	font-weight: 700;
`;

const StopName = styled.h2`
	margin: 0;
	padding-left: 10px;
	font-size: 48px;
	font-weight: 400;

	strong {
		font-weight: 600;
		color: #000;
	}
`;

const RideBox = styled.div`
	display: flex;
	flex-direction: column;
	gap: 33px;
	padding: 84px 0 65px;
	background: linear-gradient(${({ $color }) => `${$color}, ${$color}`}) ${lineAt} 0 / 12px 100% no-repeat;
`;

const RideRow = styled.div`
	${columns}
`;

const Operator = styled.div`
	height: 66px;
	padding: 40px 0 0 92px;
`;

const badge = css`
	display: flex;
	justify-content: center;
	align-items: center;
	width: 108px;
	height: 108px;
	border-radius: 50%;
`;

// taller than a one line direction, so it is let out of its row
const ModeBadge = styled.div`
	${badge}
	margin: -21px 0;
	background: ${({ $color }) => $color};
`;

const Direction = styled.div`
	display: flex;
	align-items: center;
	justify-content: space-between;
	padding: 0 26px 0 25px;
`;

const DirectionText = styled.span`
	max-width: 700px;
	font-size: 48px;
	line-height: 66px;
	font-style: italic;
`;

const PlainButton = styled.button`
	background: none;
`;

const LineTag = styled.div`
	display: flex;
	justify-content: center;
	align-items: center;
	justify-self: center;
	width: 102px;
	height: 81px;
	border: 3px solid ${({ $color }) => $color};
	border-bottom-width: 12px;
	background: #fff;
	color: #000;
	font-size: 49px;
	font-weight: 500;
`;

const RideOptions = styled.div`
	display: flex;
	align-items: center;
	justify-content: space-between;
	padding: 0 36px 0 21px;
`;

const Pill = styled.button`
	display: flex;
	align-items: center;
	gap: ${({ $dark }) => ($dark ? 34 : 20)}px;
	height: 72px;
	padding: 0 24px 0 22px;
	border-radius: 36px;
	background: ${({ $dark }) => ($dark ? "#000" : lightGrey)};
	color: ${({ $dark }) => ($dark ? "#fff" : "#000")};
	font-size: 40px;
	font-weight: 600;
`;

const Duration = styled.span`
	display: flex;
	align-items: center;
	gap: ${({ $gap }) => $gap}px;
`;

const WalkBox = styled.div`
	${columns}
	padding: 52px 0 60px;
	border-top: 6px solid ${lightGrey};
	background: linear-gradient(${dashWalk}) ${lineAt} 0 / 12px 100% no-repeat;
`;

const WalkBadge = styled.div`
	${badge}
	border: 6px solid ${dark};
	background: #fff;
`;

const WalkBody = styled.div`
	display: flex;
	flex-direction: column;
	gap: 12px;
	padding: 0 24px 0 18px;
`;

const WalkTitle = styled.h2`
	margin: 0;
	font-size: 48px;
	line-height: 66px;
	font-weight: 400;
	color: #000;
`;

const WalkOptions = styled.div`
	display: flex;
	align-items: center;
	justify-content: space-between;
`;

const ScrollThumb = styled.div`
	position: absolute;
	top: 0;
	right: 9px;
	width: 9px;
	height: 470px;
	border-radius: 0 0 5px 5px;
	background: rgba(0, 0, 0, 0.35);
`;

const HomeIndicator = styled.div`
	position: absolute;
	left: 50%;
	bottom: 24px;
	width: 402px;
	height: 15px;
	margin-left: -201px;
	border-radius: 8px;
	background: linear-gradient(90deg, #111, #161616 50%, #000);
`;
